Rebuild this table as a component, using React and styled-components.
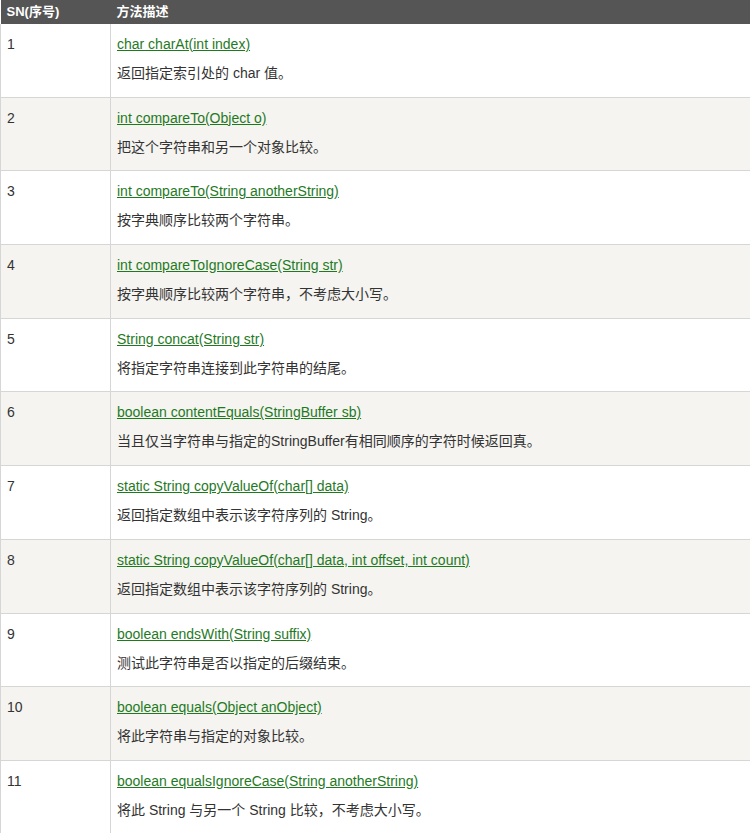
import React from "react";
import styled, { createGlobalStyle } from "styled-components";

const methods = [
  ["char charAt(int index)", "返回指定索引处的 char 值。"],
  ["int compareTo(Object o)", "把这个字符串和另一个对象比较。"],
  ["int compareTo(String anotherString)", "按字典顺序比较两个字符串。"],
  ["int compareToIgnoreCase(String str)", "按字典顺序比较两个字符串，不考虑大小写。"],
  ["String concat(String str)", "将指定字符串连接到此字符串的结尾。"],
  ["boolean contentEquals(StringBuffer sb)", "当且仅当字符串与指定的StringBuffer有相同顺序的字符时候返回真。"],
  ["static String copyValueOf(char[] data)", "返回指定数组中表示该字符序列的 String。"],
  ["static String copyValueOf(char[] data, int offset, int count)", "返回指定数组中表示该字符序列的 String。"],
  ["boolean endsWith(String suffix)", "测试此字符串是否以指定的后缀结束。"],
  ["boolean equals(Object anObject)", "将此字符串与指定的对象比较。"],
  ["boolean equalsIgnoreCase(String anotherString)", "将此 String 与另一个 String 比较，不考虑大小写。"],
];

const GlobalStyle = createGlobalStyle`
  body {
    margin: 0;
    background: #fff;
    font-family: "Liberation Sans", "Noto Sans CJK SC", sans-serif;
    font-size: 14px;
    color: #333;
  }
`;

const Table = styled.table`
  width: 750px;
  border-collapse: collapse;
  table-layout: fixed;
`;

const HeadCell = styled.th`
  background: #555;
  color: #fff;
  font-size: 13px;
  font-weight: bold;
  text-align: left;
  height: 23.5px;
  padding: 0 6px;
  line-height: 23px;
  width: ${({ w }) => w || "auto"};
`;

const Row = styled.tr`
  background: ${({ alt }) => (alt ? "#f5f4f0" : "#fff")};
  border-bottom: 1px solid #d6d6d6;
`;

const Cell = styled.td`
  vertical-align: top;
  height: 73.7px;
  box-sizing: border-box;
  padding: 11px 6px 0 6px;
  line-height: 18px;
  border-left: 1px solid #d6d6d6;
`;

const Link = styled.a`
  display: block;
  color: #1f7a1f;
  text-decoration: underline;
  cursor: pointer;
`;

const Desc = styled.div`
  margin-top: 11px;
  color: #333;
`;

export default function App() {
  return (
    <>
      <GlobalStyle />
      <Table>
        <thead>
          <tr>
            <HeadCell w="98px">SN(序号)</HeadCell>
            <HeadCell>方法描述</HeadCell>
          </tr>
        </thead>
        <tbody>
          {methods.map(([sig, desc], i) => (
            <Row key={i} alt={i % 2 === 1}>
              <Cell>{i + 1}</Cell>
              <Cell>
                <Link>{sig}</Link>
                <Desc>{desc}</Desc>
              </Cell>
            </Row>
          ))}
        </tbody>
      </Table>
    </>
  );
}
